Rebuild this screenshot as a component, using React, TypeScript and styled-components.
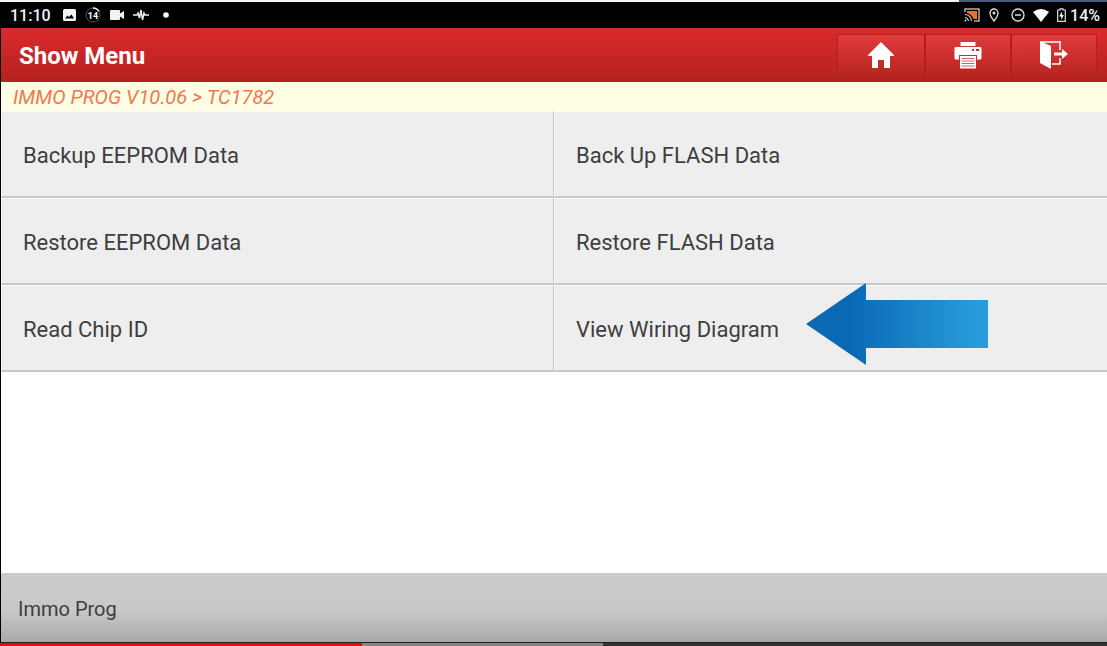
import React from "react";
import styled, { createGlobalStyle } from "styled-components";

const GlobalStyle = createGlobalStyle`
  *, *::before, *::after { box-sizing: border-box; }
  body { margin: 0; background: #fff; font-family: Roboto, "Liberation Sans", sans-serif; color: #3e3e3e; }
`;

const Screen = styled.div`
  display: flex;
  flex-direction: column;
  min-height: 100vh;
`;

const TopEdge = styled.div`
  display: flex;
  justify-content: flex-end;
  height: 2px;
  background: #f3f5f7;
`;

const TopAccent = styled.div`
  width: 148px;
  background: #465b7c;
`;

const Device = styled.div`
  flex: 1;
  display: flex;
  flex-direction: column;
  border-left: 1px solid #000;
`;

const StatusBar = styled.div`
  display: flex;
  align-items: center;
  justify-content: space-between;
  height: 26px;
  padding: 0 7px 0 9px;
  background: #000;
  color: #f2f2f2;
  font-size: 16px;
  font-weight: 500;
`;

const StatusGroup = styled.div<{ $gap: number }>`
  display: flex;
  align-items: center;
  gap: ${(p) => p.$gap}px;
  svg { display: block; }
`;

const Header = styled.header`
  display: flex;
  align-items: center;
  justify-content: space-between;
  height: 54px;
  padding: 0 10px 0 18px;
  background: linear-gradient(#da2b2b, #b3221f);
`;

const Title = styled.h1`
  margin: 0;
  padding-top: 2px;
  color: #fff;
  font-size: 24px;
  line-height: 28px;
  font-weight: 700;
`;

const Toolbar = styled.nav`
  display: flex;
  border: 1px solid #b32020;
`;

const ToolButton = styled.button`
  display: flex;
  align-items: center;
  justify-content: center;
  width: 86px;
  height: 40px;
  padding: 0;
  border: 0;
  background: linear-gradient(#e03c3c, #b92521);
  color: #fff;
  cursor: pointer;
  & + & { border-left: 2px solid #b01e1e; }
`;

const Breadcrumb = styled.div`
  height: 29px;
  padding: 0 12px;
  background: #fffde4;
  color: #ee7a50;
  font-size: 20px;
  line-height: 30px;
  font-style: italic;
`;

const Menu = styled.main`
  display: grid;
  grid-template-columns: 1fr 1fr;
`;

const MenuItem = styled.button`
  position: relative;
  height: 87px;
  padding: 4px 21px 0;
  border: solid;
  border-width: 1px 1px 2px 1px;
  border-color: #fafafa #c6c6c6 #c8c8c8 #f8f8f8;
  background: #eee;
  color: #3e3e3e;
  font: 400 22px/26px Roboto, "Liberation Sans", sans-serif;
  text-align: left;
  cursor: pointer;
  &:nth-child(even) { border-right: 0; }
`;

const Arrow = styled.svg`
  position: absolute;
  left: 251px;
  top: -3px;
`;

const Footer = styled.footer`
  height: 69px;
  margin-top: auto;
  padding: 0 17px;
  background: linear-gradient(#cbcbcb 0%, #c8c8c8 55%, #a8a8a8 100%);
  font-size: 20px;
  line-height: 72px;
`;

const Progress = styled.div`
  display: flex;
  height: 4px;
  border-top: 1px solid #222;
  background: #333;
`;

const Segment = styled.div<{ $color: string }>`
  background: ${(p) => p.$color};
`;

const items = [
  "Backup EEPROM Data",
  "Back Up FLASH Data",
  "Restore EEPROM Data",
  "Restore FLASH Data",
  "Read Chip ID",
  "View Wiring Diagram",
];

function HomeIcon() {
  return (
    <svg width="26" height="28" viewBox="0 0 26 28" fill="currentColor" aria-hidden="true">
      <path d="M13 1 26 14V15H22V27H16V19H10V27H4V15H0V14Z" />
    </svg>
  );
}

function PrintIcon() {
  return (
    <svg width="28" height="28" viewBox="0 0 28 28" aria-hidden="true">
      <path fill="#fff" d="M6.500 1h15v4h-15zM2 6h24q1.500 0 1.500 1.500V17q0 1.500-1.500 1.500h-3V14H5v4.500H2Q.5 18.500.5 17V7.500Q.5 6 2 6zM6 15h16v12.500H6z" />
      <path stroke="#d8605a" strokeWidth="1" d="M7.500 17.500h13M7.500 20h13M7.500 22.500h13M7.500 25h13" />
      <path fill="#c92a28" d="M18 8h2v2h-2zM22 8h3v2h-3z" />
    </svg>
  );
}

function ExitIcon() {
  return (
    <svg width="28" height="28" viewBox="0 0 28 28" fill="none" aria-hidden="true">
      <path d="M1 1H20V9M20 17V23H12" stroke="#fff" strokeWidth="1.500" />
      <path d="M0 0 11 5V28L0 22ZM14 11.500H22V8L28 13 22 18V14.500H14Z" fill="#fff" />
    </svg>
  );
}

function NotificationIcons() {
  return (
    <>
      <svg width="13" height="12" viewBox="0 0 13 12" aria-hidden="true">
        <rect width="13" height="12" rx="1.500" fill="#f2f2f2" />
        <path d="M2 9.500 4.500 6.500 6 8 8.500 5.500 11 9.500Z" fill="#000" />
      </svg>
      <svg width="16" height="16" viewBox="0 0 16 16" aria-hidden="true">
        <circle cx="8" cy="8" r="7" fill="none" stroke="#555" />
        <path d="M8 1a7 7 0 0 1 6 3.500" fill="none" stroke="#eee" strokeWidth="1.500" />
        <text x="8" y="11.500" fill="#fff" fontSize="9" fontWeight="700" textAnchor="middle">14</text>
      </svg>
      <svg width="14" height="10" viewBox="0 0 14 10" aria-hidden="true">
        <path d="M1 0h8q1 0 1 1v2.500L14 1v8l-4-2.500V9q0 1-1 1H1Q0 10 0 9V1Q0 0 1 0Z" fill="#f2f2f2" />
      </svg>
      <svg width="16" height="12" viewBox="0 0 16 12" fill="none" aria-hidden="true">
        <path d="M0 6H4L5 4 6.500 9 8 1 9.500 11 11 4 12 6H16" stroke="#eee" strokeWidth="1.500" />
      </svg>
      <svg width="16" height="6" viewBox="0 0 16 6" aria-hidden="true">
        <circle cx="8" cy="3" r="2.800" fill="#fff" />
      </svg>
    </>
  );
}

function CastIcon() {
  return (
    <svg width="16" height="14" viewBox="0 0 16 14" fill="none" aria-hidden="true">
      <path d="M1 4V1H15V13H10" stroke="#c9a79b" strokeWidth="1.500" />
      <path d="M3 3H13V11H9.500Q8 6.500 3 5Z" fill="#e9702f" />
      <path d="M1 6.500Q7 7 7.500 13M1 9.500Q4 10 4.500 13" stroke="#ccc" strokeWidth="1.200" />
      <circle cx="1.500" cy="12.500" r="1" fill="#ccc" />
    </svg>
  );
}

function PinIcon() {
  return (
    <svg width="10" height="14" viewBox="0 0 10 14" fill="none" aria-hidden="true">
      <path d="M5 13Q1 8 1 5a4 4 0 0 1 8 0Q9 8 5 13Z" stroke="#ddd" strokeWidth="1.300" />
      <circle cx="5" cy="5" r="1.500" fill="#ddd" />
    </svg>
  );
}

function SilentIcon() {
  return (
    <svg width="14" height="14" viewBox="0 0 14 14" fill="none" aria-hidden="true">
      <circle cx="7" cy="7" r="6" stroke="#ddd" strokeWidth="1.400" />
      <path d="M4 7H10" stroke="#ddd" strokeWidth="1.500" />
    </svg>
  );
}

function WifiIcon() {
  return (
    <svg width="16" height="13" viewBox="0 0 16 13" aria-hidden="true">
      <path d="M0 3Q8-3 16 3L8 13Z" fill="#fff" />
    </svg>
  );
}

function BatteryIcon() {
  return (
    <svg width="9" height="14" viewBox="0 0 9 14" fill="none" aria-hidden="true">
      <path d="M3 .8H6V2H8.300V13.300H.7V2H3Z" stroke="#ddd" strokeWidth="1.200" />
      <path d="M5 3.500 2.200 8.500H4.200V12L6.800 7H5Z" fill="#fff" />
    </svg>
  );
}

export default function App() {
  return (
    <>
      <GlobalStyle />
      <Screen>
        <TopEdge><TopAccent /></TopEdge>
        <Device>
          <StatusBar>
            <StatusGroup $gap={12}>
              <span>11:10</span>
              <StatusGroup $gap={9}>
                <NotificationIcons />
              </StatusGroup>
            </StatusGroup>
            <StatusGroup $gap={12}>
              <StatusGroup $gap={9}>
                <CastIcon />
                <PinIcon />
              </StatusGroup>
              <StatusGroup $gap={8}>
                <SilentIcon />
                <WifiIcon />
                <StatusGroup $gap={4}>
                  <BatteryIcon />
                  <span>14%</span>
                </StatusGroup>
              </StatusGroup>
            </StatusGroup>
          </StatusBar>
          <Header>
            <Title>Show Menu</Title>
            <Toolbar>
              <ToolButton aria-label="Home"><HomeIcon /></ToolButton>
              <ToolButton aria-label="Print"><PrintIcon /></ToolButton>
              <ToolButton aria-label="Exit"><ExitIcon /></ToolButton>
            </Toolbar>
          </Header>
          <Breadcrumb>IMMO PROG V10.06 &gt; TC1782</Breadcrumb>
          <Menu>
            {items.map((label, i) => (
              <MenuItem key={label}>
                {label}
                {i === items.length - 1 && (
                  <Arrow width="182" height="82" viewBox="0 0 182 82" aria-hidden="true">
                    <defs>
                      <linearGradient id="arrow-fill">
                        <stop offset="0.25" stopColor="#0a69b5" />
                        <stop offset="0.85" stopColor="#2496d6" />
                        <stop offset="1" stopColor="#2b9ddb" />
                      </linearGradient>
                    </defs>
                    <path d="M0 41 60 0V17H182V65H60V82Z" fill="url(#arrow-fill)" />
                  </Arrow>
                )}
              </MenuItem>
            ))}
          </Menu>
          <Footer>Immo Prog</Footer>
        </Device>
        <Progress>
          <Segment $color="#e80c0c" style={{ width: "32.7%" }} />
          <Segment $color="#858585" style={{ width: "21.8%" }} />
        </Progress>
      </Screen>
    </>
  );
}
